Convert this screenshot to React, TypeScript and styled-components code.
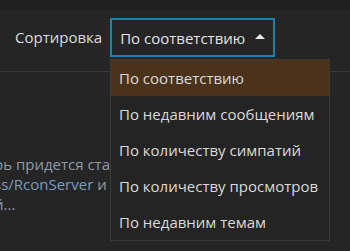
import React from "react";
import styled, { createGlobalStyle } from "styled-components";

const Global = createGlobalStyle`
  html, body { margin: 0; padding: 0; background: #252525; }
  body { font-family: "Open Sans", "Noto Sans", sans-serif; overflow: hidden; }
`;

const Page = styled.div`
  position: relative;
  width: 350px;
  height: 251px;
  overflow: hidden;
  background: #252525;
`;

const TopStrip = styled.div`
  height: 10px;
  background: #202020;
`;

const Bar = styled.div`
  display: flex;
  align-items: flex-start;
  height: 53px;
  padding: 8px 0 0 15px;
  border-bottom: 1px solid #383838;
`;

const Label = styled.span`
  font-size: 15px;
  line-height: 39px;
  color: #dcdcdc;
  margin-right: 8px;
`;

const SelectBox = styled.div`
  display: flex;
  align-items: center;
  box-sizing: border-box;
  width: 165px;
  height: 39px;
  padding-left: 8px;
  border: 2px solid #1b80b2;
  font-size: 15px;
  color: #e4e4e4;
`;

const Caret = styled.span`
  width: 0;
  height: 0;
  margin-left: 10px;
  margin-top: -3px;
  border-left: 5px solid transparent;
  border-right: 5px solid transparent;
  border-bottom: 5px solid #e8e8e8;
`;

const Body = styled.div`
  padding-top: 82px;
`;

const Para = styled.p`
  margin: 0 0 0 -6px;
  font-size: 15px;
  line-height: 20px;
  color: #8f9aa5;
`;

const Link = styled.span`
  color: #7a9cbc;
`;

const Menu = styled.ul`
  position: absolute;
  left: 110px;
  top: 59px;
  width: 218px;
  margin: 0;
  padding: 0;
  list-style: none;
  background: #242424;
  border: 1px solid #3a3a3a;
`;

const Item = styled.li<{ $active?: boolean }>`
  height: 36px;
  line-height: 36px;
  padding-left: 8px;
  font-size: 15px;
  color: #dadada;
  background: ${(p) => (p.$active ? "#4b321a" : "transparent")};
`;

const options = [
  "По соответствию",
  "По недавним сообщениям",
  "По количеству симпатий",
  "По количеству просмотров",
  "По недавним темам",
];

export default function App() {
  return (
    <Page>
      <Global />
      <TopStrip />
      <Bar>
        <Label>Сортировка</Label>
        <SelectBox>
          По соответствию
          <Caret />
        </SelectBox>
      </Bar>
      <Body>
        <Para>
          рь придется стать владельцем
          <br />
          <Link>ss/RconServer</Link> и сделать
          <br />
          й...
        </Para>
      </Body>
      <Menu>
        {options.map((o, i) => (
          <Item key={o} $active={i === 0}>
            {o}
          </Item>
        ))}
      </Menu>
    </Page>
  );
}
